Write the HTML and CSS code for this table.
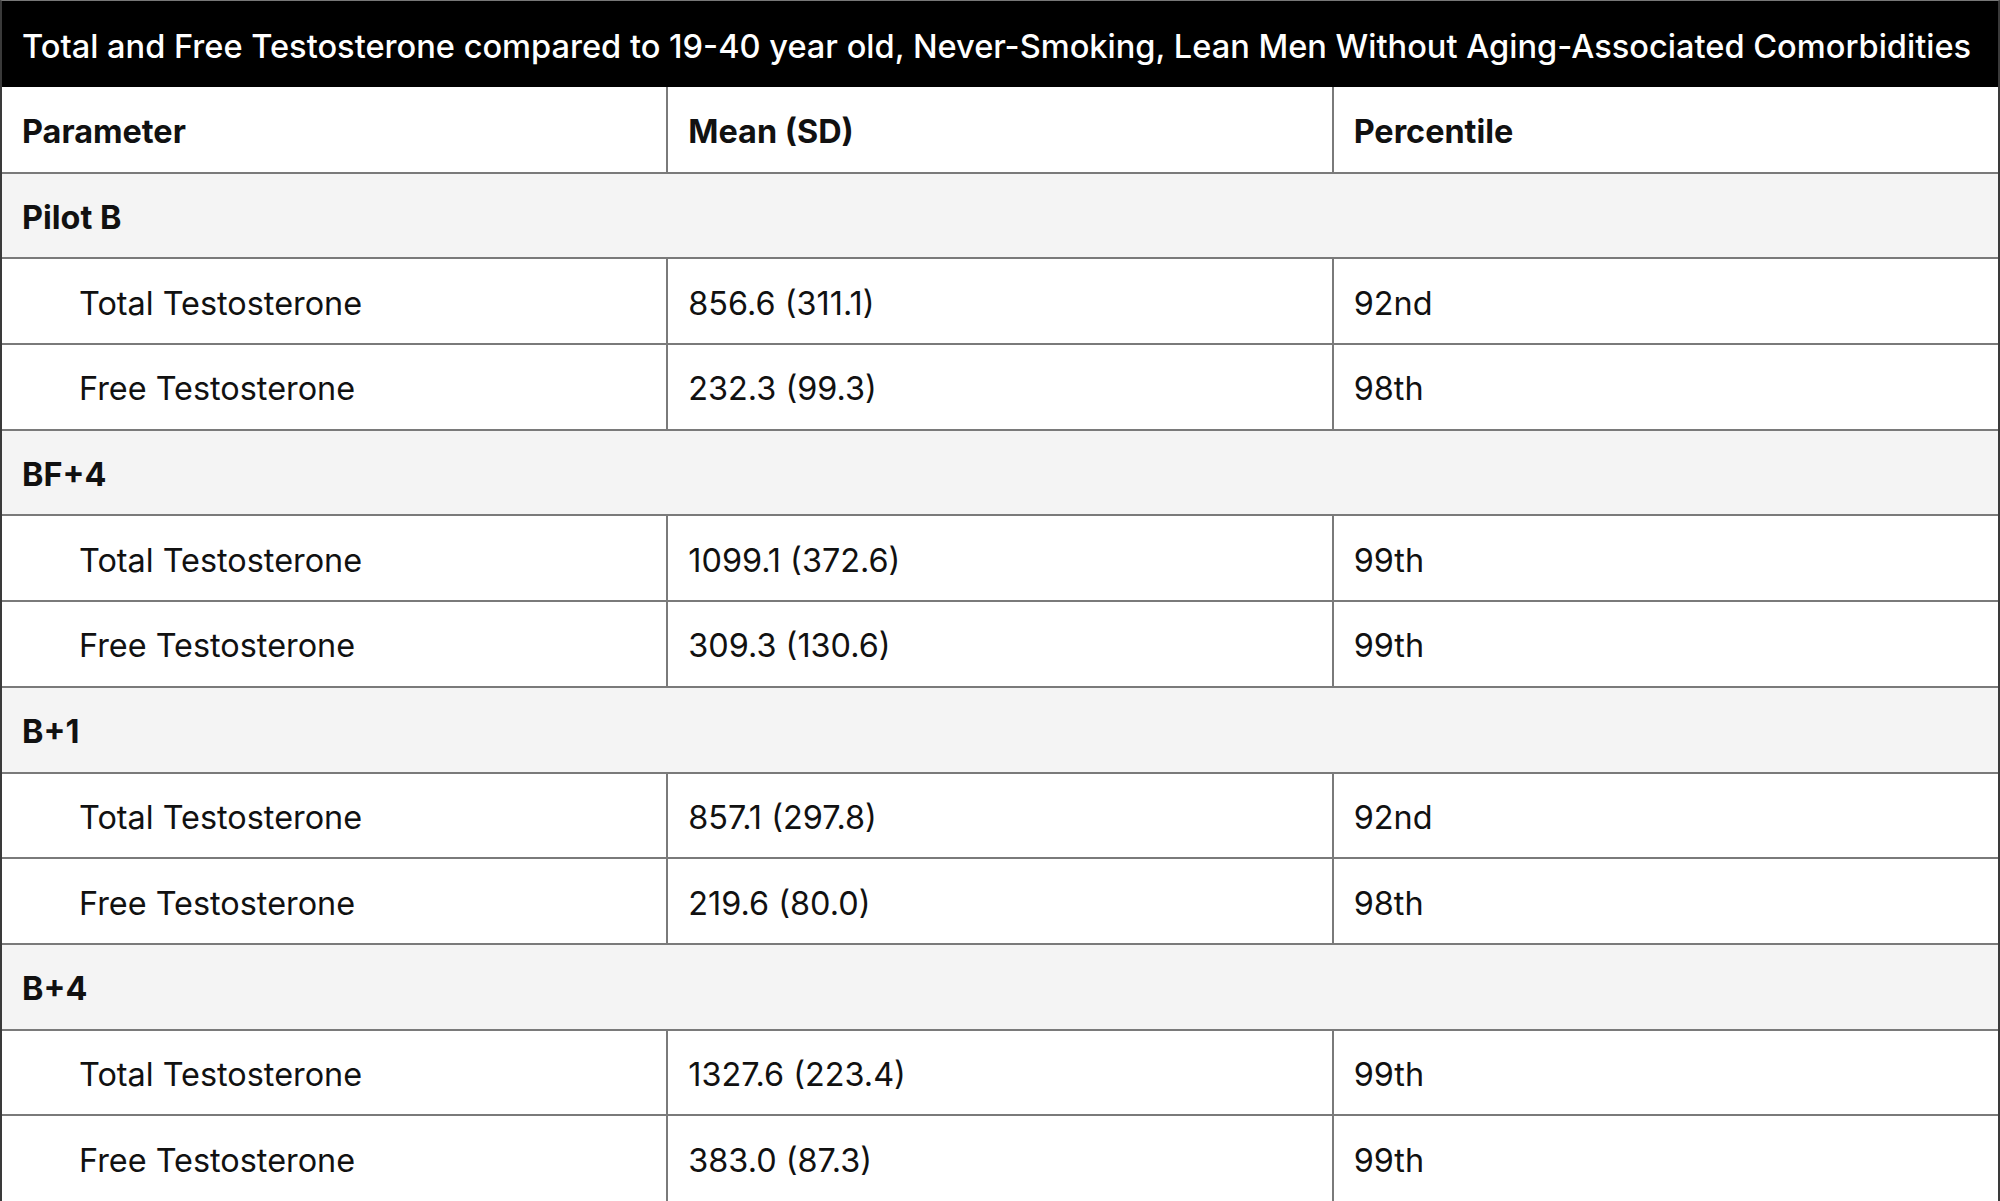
FILE: index.html
```html
<!DOCTYPE html>
<html>
<head>
<meta charset="utf-8">
<link rel="stylesheet" href="styles.css">
</head>
<body>
<div class="wrap">
  <div class="title">Total and Free Testosterone compared to 19-40 year old, Never-Smoking, Lean Men Without Aging-Associated Comorbidities</div>
  <table class="data">
    <colgroup><col class="c"><col class="c"><col class="c"></colgroup>
    <thead>
      <tr class="head"><th>Parameter</th><th>Mean (SD)</th><th>Percentile</th></tr>
    </thead>
    <tbody>
      <tr class="group"><td colspan="3">Pilot B</td></tr>
      <tr><td class="sub">Total Testosterone</td><td>856.6 (311.1)</td><td>92nd</td></tr>
      <tr><td class="sub">Free Testosterone</td><td>232.3 (99.3)</td><td>98th</td></tr>
      <tr class="group"><td colspan="3">BF+4</td></tr>
      <tr><td class="sub">Total Testosterone</td><td>1099.1 (372.6)</td><td>99th</td></tr>
      <tr><td class="sub">Free Testosterone</td><td>309.3 (130.6)</td><td>99th</td></tr>
      <tr class="group"><td colspan="3">B+1</td></tr>
      <tr><td class="sub">Total Testosterone</td><td>857.1 (297.8)</td><td>92nd</td></tr>
      <tr><td class="sub">Free Testosterone</td><td>219.6 (80.0)</td><td>98th</td></tr>
      <tr class="group"><td colspan="3">B+4</td></tr>
      <tr><td class="sub">Total Testosterone</td><td>1327.6 (223.4)</td><td>99th</td></tr>
      <tr><td class="sub">Free Testosterone</td><td>383.0 (87.3)</td><td>99th</td></tr>
    </tbody>
  </table>
</div>
</body>
</html>
```
FILE: styles.css
```css
html, body {
  margin: 0;
  padding: 0;
  background: #ffffff;
}
body {
  font-family: "Inter", "Liberation Sans", sans-serif;
  color: #111111;
}
.wrap {
  width: 2000px;
  box-sizing: border-box;
  border-left: 2px solid #3a3a3a;
  border-right: 2px solid #3a3a3a;
  border-top: 1px solid #777777;
}
.title {
  background: #000000;
  color: #ffffff;
  height: 86px;
  box-sizing: border-box;
  display: flex;
  align-items: center;
  padding: 3px 0 0 20px;
  font-size: 32.6px;
  font-weight: 500;
  white-space: nowrap;
}
.data {
  width: 100%;
  border-collapse: collapse;
  table-layout: fixed;
  font-size: 32.4px;
}
.data th, .data td {
  height: 85.7px;
  box-sizing: border-box;
  padding: 4px 0 0 20px;
  text-align: left;
  vertical-align: middle;
  border-top: 2px solid #7a7a7a;
  border-left: 2px solid #7a7a7a;
}
.data tr > :first-child {
  border-left: none;
}
.data thead th {
  border-top: none;
  font-weight: 700;
}
.group td {
  background: #f4f4f4;
  font-weight: 700;
}
.data td.sub {
  padding-left: 77px;
}
```
